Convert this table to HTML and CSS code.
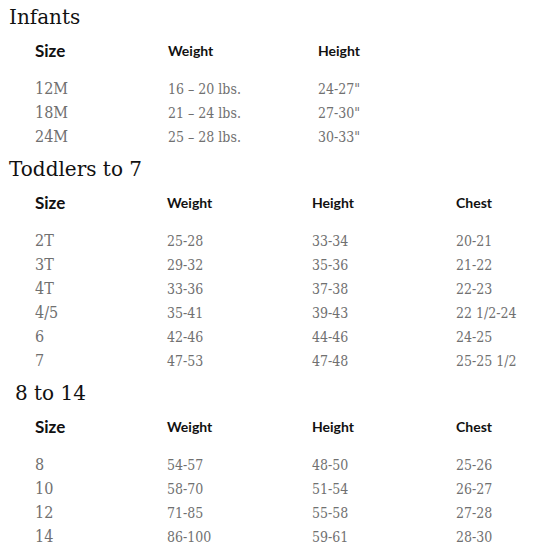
FILE: index.html
```html
<!DOCTYPE html>
<html>
<head>
<meta charset="utf-8">
<link rel="stylesheet" href="styles.css">
</head>
<body>
<section class="group">
  <h2 class="title">Infants</h2>
  <table class="sizes infants">
    <colgroup><col class="c1"><col class="c2"><col class="c3"></colgroup>
    <thead><tr><th class="sz">Size</th><th>Weight</th><th>Height</th></tr></thead>
    <tbody>
      <tr><td class="sz">12M</td><td>16 – 20 lbs.</td><td>24-27"</td></tr>
      <tr><td class="sz">18M</td><td>21 – 24 lbs.</td><td>27-30"</td></tr>
      <tr><td class="sz">24M</td><td>25 – 28 lbs.</td><td>30-33"</td></tr>
    </tbody>
  </table>
</section>
<section class="group">
  <h2 class="title">Toddlers to 7</h2>
  <table class="sizes kids">
    <colgroup><col class="c1"><col class="c2"><col class="c3"><col class="c4"></colgroup>
    <thead><tr><th class="sz">Size</th><th>Weight</th><th>Height</th><th>Chest</th></tr></thead>
    <tbody>
      <tr><td class="sz">2T</td><td>25-28</td><td>33-34</td><td>20-21</td></tr>
      <tr><td class="sz">3T</td><td>29-32</td><td>35-36</td><td>21-22</td></tr>
      <tr><td class="sz">4T</td><td>33-36</td><td>37-38</td><td>22-23</td></tr>
      <tr><td class="sz">4/5</td><td>35-41</td><td>39-43</td><td>22 1/2-24</td></tr>
      <tr><td class="sz">6</td><td>42-46</td><td>44-46</td><td>24-25</td></tr>
      <tr><td class="sz">7</td><td>47-53</td><td>47-48</td><td>25-25 1/2</td></tr>
    </tbody>
  </table>
</section>
<section class="group">
  <h2 class="title indent">8 to 14</h2>
  <table class="sizes kids">
    <colgroup><col class="c1"><col class="c2"><col class="c3"><col class="c4"></colgroup>
    <thead><tr><th class="sz">Size</th><th>Weight</th><th>Height</th><th>Chest</th></tr></thead>
    <tbody>
      <tr><td class="sz">8</td><td>54-57</td><td>48-50</td><td>25-26</td></tr>
      <tr><td class="sz">10</td><td>58-70</td><td>51-54</td><td>26-27</td></tr>
      <tr><td class="sz">12</td><td>71-85</td><td>55-58</td><td>27-28</td></tr>
      <tr><td class="sz">14</td><td>86-100</td><td>59-61</td><td>28-30</td></tr>
    </tbody>
  </table>
</section>
</body>
</html>
```
FILE: styles.css
```css
html, body {
  margin: 0;
  padding: 0;
  background: #fff;
}
.group {
  margin: 0;
}
.title {
  margin: 0;
  padding-left: 9px;
  font-family: "DejaVu Serif", serif;
  font-weight: normal;
  font-size: 20px;
  line-height: 34px;
  height: 34px;
  color: #111;
}
.title.indent {
  padding-left: 15px;
}
.sizes {
  border-collapse: collapse;
  border-spacing: 0;
  margin: 5px 0 3px 35px;
  table-layout: fixed;
}
.infants .c1 { width: 133px; }
.infants .c2 { width: 150px; }
.infants .c3 { width: 100px; }
.kids .c1 { width: 132px; }
.kids .c2 { width: 145px; }
.kids .c3 { width: 144px; }
.kids .c4 { width: 75px; }
.sizes th {
  padding: 0 0 14px 0;
  text-align: left;
  font-family: Lato, "Noto Sans", sans-serif;
  font-weight: bold;
  font-size: 14px;
  line-height: 24px;
  color: #111;
}
.sizes th.sz {
  font-size: 17px;
}
.sizes td {
  padding: 0;
  font-family: "DejaVu Serif Condensed", "DejaVu Serif", serif;
  font-stretch: semi-condensed;
  font-size: 14px;
  line-height: 24px;
  color: #707070;
  white-space: nowrap;
}
.sizes td.sz {
  font-size: 16px;
}
```
